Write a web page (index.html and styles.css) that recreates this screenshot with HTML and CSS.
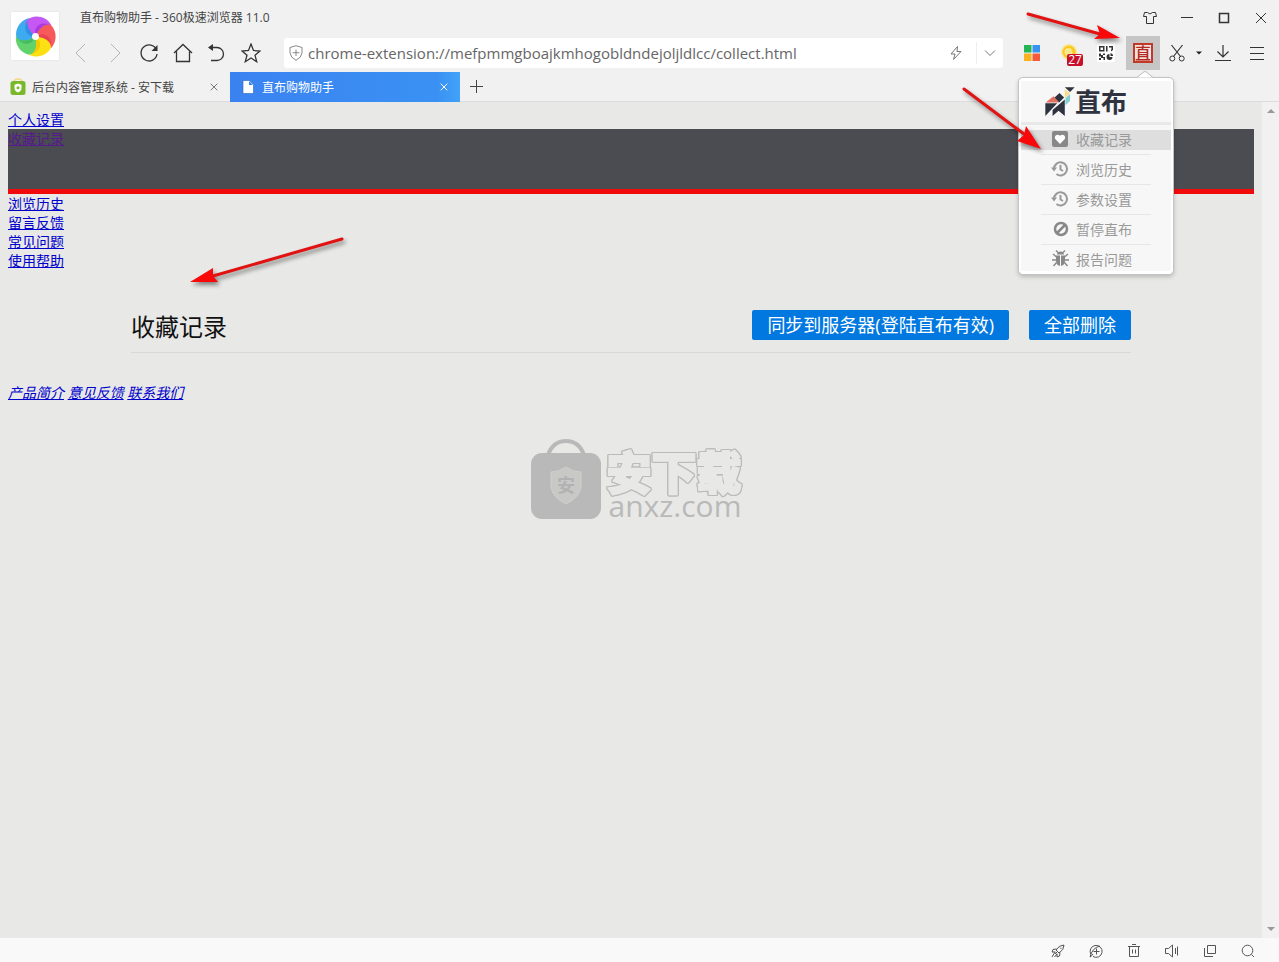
FILE: index.html
```
<!DOCTYPE html>
<html lang="zh-CN">
<head>
<meta charset="utf-8">
<title>直布购物助手</title>
<link rel="stylesheet" href="styles.css">
</head>
<body>
<header class="chrome">
  <div class="chrome-top">
    <svg class="brand" viewBox="0 0 48 48" aria-hidden="true">
      <defs>
        <path id="petal" d="M0 0C-6-3-11-9-10-15C-3-23 11-21 16-11C11-14 4-10 0 0Z"/>
        <path id="petal-fold" d="M0 0C-3-8 4-17 16-11C11-14 4-10 0 0Z"/>
      </defs>
      <rect width="48" height="48" fill="#fff"/>
      <g transform="translate(24.500 24.500)">
        <g fill="#3eabf0" transform="rotate(288)"><use href="#petal"/></g>
        <g fill="#62d26c" transform="rotate(216)"><use href="#petal"/></g>
        <g fill="#fde014" transform="rotate(144)"><use href="#petal"/></g>
        <g fill="#f65a5a" transform="rotate(72)"><use href="#petal"/></g>
        <g fill="#c558f2"><use href="#petal"/></g>
        <g fill="#a93be0"><use href="#petal-fold"/></g>
        <g fill="#e94452" transform="rotate(72)"><use href="#petal-fold"/></g>
        <g fill="#f5c800" transform="rotate(144)"><use href="#petal-fold"/></g>
        <g fill="#48bd60" transform="rotate(216)"><use href="#petal-fold"/></g>
        <g fill="#2f8fe6" transform="rotate(288)"><use href="#petal-fold"/></g>
        <circle r="3.500" fill="#fff"/>
      </g>
    </svg>
    <div class="chrome-rows">
      <div class="title-row">
        <span class="window-title">直布购物助手 - 360极速浏览器 11.0</span>
        <div class="window-buttons">
          <button class="icon-btn" aria-label="皮肤"><svg width="14" height="14" viewBox="0 0 14 14"><path d="M4.500 1.500H1.500L.5 5.500H3.500V12.500H10.500V5.500H13.500L12.500 1.500H9.500Q7 4.500 4.500 1.500Z"/></svg></button>
          <button class="icon-btn" aria-label="最小化"><svg width="12" height="12" viewBox="0 0 12 12"><path d="M0 5.500H12"/></svg></button>
          <button class="icon-btn" aria-label="最大化"><svg width="12" height="12" viewBox="0 0 12 12"><path stroke-width="1.500" d="M1.500 1.500H10.500V10.500H1.500Z"/></svg></button>
          <button class="icon-btn" aria-label="关闭"><svg width="12" height="12" viewBox="0 0 12 12"><path d="M1 1L11 11M11 1L1 11"/></svg></button>
        </div>
      </div>
      <div class="toolbar">
        <nav class="nav-buttons" aria-label="导航">
          <button class="icon-btn dim" aria-label="后退"><svg width="20" height="20" viewBox="0 0 20 20"><path d="M14 1L5 10L14 19"/></svg></button>
          <button class="icon-btn dim" aria-label="前进"><svg width="20" height="20" viewBox="0 0 20 20"><path d="M6 1L15 10L6 19"/></svg></button>
          <button class="icon-btn" aria-label="刷新"><svg width="20" height="20" viewBox="0 0 20 20"><path stroke-width="1.300" d="M17.500 7A8 8 0 1 0 18 11"/><path fill="#333" stroke="none" d="M18.500 2V8H12.500Z"/></svg></button>
          <button class="icon-btn" aria-label="主页"><svg width="20" height="20" viewBox="0 0 20 20"><path stroke-width="1.300" d="M1 10L10 1.500L19 10M3.500 8.500V18.500H16.500V8.500"/></svg></button>
          <button class="icon-btn" aria-label="撤销"><svg width="20" height="20" viewBox="0 0 20 20"><path stroke-width="1.300" d="M4 4.500H10A6.500 6.500 0 0 1 10 17.500H4"/><path fill="#333" stroke="none" d="M1 4.500L6 1V8Z"/></svg></button>
          <button class="icon-btn" aria-label="收藏"><svg width="20" height="20" viewBox="0 0 20 20"><path stroke-width="1.300" d="M10 1L12.500 7.500L19 8L14 12.200L15.700 18.700L10 15L4.300 18.700L6 12.200L1 8L7.500 7.500Z"/></svg></button>
        </nav>
        <div class="address">
          <svg class="shield" width="14" height="16" viewBox="0 0 14 16"><path d="M7 .7L13 2.500V8Q12.500 12.500 7 15.300Q1.500 12.500 1 8V2.500ZM7 4.500V11M3.700 7.700H10.300"/></svg>
          <input class="url" aria-label="地址" value="chrome-extension://mefpmmgboajkmhogobldndejoljldlcc/collect.html">
          <button class="addr-btn" aria-label="极速模式"><svg width="14" height="16" viewBox="0 0 14 16"><path d="M8.500 1.500L2 9H6L4.500 14.500L12 6.500H8Z"/></svg></button>
          <button class="addr-btn addr-more" aria-label="更多地址"><svg width="12" height="8" viewBox="0 0 12 8"><path d="M1 1.500L6 6.500L11 1.500"/></svg></button>
        </div>
        <div class="tools">
          <button class="icon-btn" aria-label="应用"><svg width="16" height="16" viewBox="0 0 16 16" stroke="none"><path fill="#22b455" d="M0 0H7.500V7.500H0Z"/><path fill="#3594f0" d="M8.500 0H16V7.500H8.500Z"/><path fill="#fbb022" d="M0 8.500H7.500V16H0Z"/><path fill="#f45b3b" d="M8.500 8.500H16V16H8.500Z"/></svg></button>
          <button class="icon-btn weather" aria-label="天气"><svg width="18" height="18" viewBox="0 0 18 18" stroke="none"><circle cx="9" cy="8" r="8" fill="#f8e7a0"/><circle cx="9" cy="8" r="6.500" fill="#fbc91c"/><circle cx="8.500" cy="8" r="4" fill="#fde98c"/></svg><span class="badge">27</span></button>
          <button class="icon-btn" aria-label="二维码"><svg width="18" height="18" viewBox="0 0 18 18" stroke="none"><rect width="18" height="18" rx="2" fill="#fff"/><path fill="#333" fill-rule="evenodd" d="M2 2H7.500V7.500H2ZM3.500 3.500V6H6V3.500ZM9 2H10.500V7.500H9ZM12 2H16V6L14 7.500V5.500H14.500V3.500H12ZM2 9.500H4V11H6V9.500H8V11H6V13H8V16H6.500V14H4V12.500H2ZM2 14H4V16H2ZM12.500 10A3 3 0 1 0 15.500 13H12.500ZM13.500 9V12H16.200Q16 9.500 13.500 9Z"/></svg></button>
          <button class="icon-btn active" aria-label="直布"><span class="zhi-icon">直</span></button>
          <button class="icon-btn cut" aria-label="截图"><svg width="16" height="18" viewBox="0 0 16 18"><path stroke-width="1.200" d="M2.500 1L11.500 12.500M13.500 1L4.500 12.500"/><circle cx="3.300" cy="14.500" r="2.500"/><circle cx="12.700" cy="14.500" r="2.500"/></svg></button>
          <button class="icon-btn caret" aria-label="截图选项"><svg width="6" height="4" viewBox="0 0 6 4" stroke="none"><path fill="#222" d="M0 .5H6L3 3.500Z"/></svg></button>
          <button class="icon-btn flush" aria-label="下载"><svg width="16" height="18" viewBox="0 0 16 18"><path stroke-width="1.200" d="M8 1V13M2.500 7.500L8 13L13.500 7.500M0 16.500H16"/></svg></button>
          <button class="icon-btn flush" aria-label="菜单"><svg width="14" height="14" viewBox="0 0 14 14"><path d="M0 1.500H14M0 7.500H14M0 13.500H14"/></svg></button>
        </div>
      </div>
    </div>
  </div>
  <div class="tabs">
    <div class="tab">
      <svg width="16" height="18" viewBox="0 0 16 18"><path fill="none" stroke="#f3d783" stroke-width="1.500" d="M4 4Q4 1 8 1T12 4"/><rect x=".5" y="3" width="15" height="14" rx="2.500" fill="#78b82a"/><path fill="#fff" d="M8 5.500L11.500 6.700V10Q11.500 13 8 14.500Q4.500 13 4.500 10V6.700Z"/><circle cx="8" cy="9.800" r="1.500" fill="#78b82a"/></svg>
      <span class="tab-label">后台内容管理系统 - 安下载</span>
      <button class="tab-close" aria-label="关闭标签"><svg width="8" height="8" viewBox="0 0 8 8"><path d="M.7 .7L7.300 7.300M7.300 .7L.7 7.300"/></svg></button>
    </div>
    <div class="tab tab-current">
      <svg width="16" height="14" viewBox="0 0 16 14"><path fill="#fff" stroke="#2667b5" stroke-width=".6" d="M3 .5H9.500L13.500 4.500V13.500H3Z"/><path fill="#3b82f1" d="M9 1V5H13Z"/></svg>
      <span class="tab-label">直布购物助手</span>
      <button class="tab-close" aria-label="关闭标签"><svg width="8" height="8" viewBox="0 0 8 8"><path d="M.7 .7L7.300 7.300M7.300 .7L.7 7.300"/></svg></button>
    </div>
    <button class="tab-new" aria-label="新标签"><svg width="13" height="13" viewBox="0 0 13 13"><path d="M6.500 0V13M0 6.500H13"/></svg></button>
  </div>
</header>

<div class="viewport">
  <main class="page">
    <nav class="links" aria-label="页面">
      <div><a href="#settings">个人设置</a></div>
      <div class="current"><a class="visited" href="#collect">收藏记录</a></div>
      <div><a href="#history">浏览历史</a></div>
      <div><a href="#feedback">留言反馈</a></div>
      <div><a href="#faq">常见问题</a></div>
      <div><a href="#help">使用帮助</a></div>
    </nav>
    <section class="records">
      <h1>收藏记录</h1>
      <div class="actions">
        <button class="action">同步到服务器(登陆直布有效)</button>
        <button class="action">全部删除</button>
      </div>
    </section>
    <address class="footer-links"><a href="#about">产品简介</a> <a href="#advice">意见反馈</a> <a href="#contact">联系我们</a></address>
  </main>
  <div class="scrollbar" aria-hidden="true">
    <svg width="8" height="4" viewBox="0 0 8 4"><path d="M0 4L4 0L8 4Z"/></svg>
    <svg width="8" height="4" viewBox="0 0 8 4"><path d="M0 0L4 4L8 0Z"/></svg>
  </div>
  <div class="watermark">
    <svg width="72" height="82" viewBox="0 0 72 82"><path fill="none" stroke="#b9b9b9" stroke-width="4" d="M18 17Q23 3 36 3T54 17"/><rect x="1" y="15" width="70" height="66" rx="11" fill="#b9b9b9"/><path fill="#c8c8c7" stroke="#cfcfce" d="M36 29Q43 34 51 34V49Q50 59 36 66Q22 59 21 49V34Q29 34 36 29Z"/><text class="bag-mark" x="36" y="54" text-anchor="middle">安</text></svg>
    <div class="watermark-text">
      <span class="watermark-name">安下载</span>
      <span class="watermark-site">anxz.com</span>
    </div>
  </div>
</div>

<footer class="status">
  <button class="icon-btn" aria-label="加速"><svg width="14" height="14" viewBox="0 0 14 14"><path d="M13 1Q8 1 5 6L8 9Q13 6 13 1ZM5.500 5L2 5.500L1 8H4.500M9 8.500L8.500 12L6 13V9.500M4 8L1 13M6 10L3.500 13M9 3.500L10.500 5M4 10L7 7"/></svg></button>
  <button class="icon-btn" aria-label="网页加速"><svg width="14" height="14" viewBox="0 0 14 14"><path d="M4 12.500A6 6 0 1 0 2 10.500M1 13Q3 4 11 2M1 13Q3 12 4 10M4.500 7.500H10.500M7.500 4.500V10.500"/></svg></button>
  <button class="icon-btn" aria-label="清理"><svg width="12" height="14" viewBox="0 0 12 14"><path d="M0 2.500H12M4 .5H8M1.500 2.500V12.500H10.500V2.500M4.500 5.500V9.500M7.500 5.500V9.500"/></svg></button>
  <button class="icon-btn" aria-label="声音"><svg width="14" height="14" viewBox="0 0 14 14"><path d="M.5 4.500H3.500L7.500 1V13L3.500 9.500H.5ZM10.500 4V10M12.500 2.500V11.500"/></svg></button>
  <button class="icon-btn" aria-label="窗口"><svg width="12" height="12" viewBox="0 0 12 12"><path d="M3.500 .5H11.500V8.500H3.500ZM.5 3V11.500H9"/></svg></button>
  <button class="icon-btn" aria-label="缩放"><svg width="14" height="14" viewBox="0 0 14 14"><circle cx="6.500" cy="6.500" r="5.300"/><path d="M10.500 10.500L13 13"/></svg></button>
</footer>

<aside class="popup">
  <svg class="popup-tip" width="16" height="7" viewBox="0 0 16 7"><path fill="#fff" stroke="#bbb" d="M0 6.500L7 .7H9L16 6.500"/></svg>
  <div class="popup-brand">
    <svg width="30" height="30" viewBox="105 50 91 91"><path fill="#e4715f" d="M107 97L131 78L148 97Z"/><path fill="#2f3340" d="M134 82L149 68L163 82L148 97ZM106 99H142L106 138ZM165 88V138L146 122L128 138V120ZM165 51H195L181 65Z"/><path fill="#f7dc8b" d="M165 57L181 69L165 84Z"/><path fill="#7fd0cf" d="M167 84L181 71V92L167 105Z"/></svg>
    <span>直布</span>
  </div>
  <ul class="popup-list">
    <li><a class="selected" href="#p-collect"><svg viewBox="0 0 18 18"><rect x="1" y="1" width="16" height="16" rx="2" fill="#888"/><path fill="#fff" d="M9 14L4.500 9.300C2.500 7 5.500 2.700 9 5.800C12.500 2.700 15.500 7 13.500 9.300Z"/></svg>收藏记录</a></li>
    <li><a href="#p-history"><svg viewBox="0 0 18 18"><path fill="none" stroke="#999" stroke-width="2" d="M3 9A6.500 6.500 0 1 1 5.500 14M9.500 5V9.500L12 11"/><path fill="#999" d="M0 7.500H6L3 11.500Z"/></svg>浏览历史</a></li>
    <li><a href="#p-settings"><svg viewBox="0 0 18 18"><path fill="none" stroke="#999" stroke-width="2" d="M3 9A6.500 6.500 0 1 1 5.500 14M9.500 5V9.500L12 11"/><path fill="#999" d="M0 7.500H6L3 11.500Z"/></svg>参数设置</a></li>
    <li><a href="#p-pause"><svg viewBox="0 0 18 18"><circle cx="10" cy="9" r="6" fill="none" stroke="#888" stroke-width="2.500"/><path stroke="#888" stroke-width="2.500" d="M14 5L6 13"/></svg>暂停直布</a></li>
    <li><a href="#p-report"><svg viewBox="0 0 18 18"><path fill="#888" d="M6 4.500Q6.500 1.500 9.500 1.500T13 4.500ZM5 5.500H9V16Q5 15 5 11ZM10 5.500H14V11Q14 15 10 16Z"/><path fill="none" stroke="#888" stroke-width="1.400" d="M2 4L5.500 7M17 4L13.500 7M1 10H5M18 10H14M2.500 16L5.500 12.500M16.500 16L13.500 12.500M5 .5L7.500 3M14 .5L11.500 3"/></svg>报告问题</a></li>
  </ul>
</aside>

<svg class="pointer pointer-tool" width="100" height="36" viewBox="0 0 100 36"><path class="shaft" d="M4 4L76 24"/><path class="head" d="M96 28L70 29L76 24L73 15Z"/></svg>
<svg class="pointer pointer-menu" width="88" height="70" viewBox="0 0 88 70"><path class="shaft" d="M4 4L64 49"/><path class="head" d="M81 64L57 56L64 50L66 41Z"/></svg>
<svg class="pointer pointer-page" width="164" height="56" viewBox="0 0 164 56"><path class="shaft" d="M155 5L26 42"/><path class="head" d="M3 48L26 34L26 42L31 48Z"/></svg>
</body>
</html>
```
FILE: styles.css
```
* { box-sizing: border-box; }

body {
  position: relative;
  display: flex;
  flex-direction: column;
  min-height: 100vh;
  margin: 0;
  background: #e8e8e6;
  color: #444;
  font: 12px/18px "Open Sans", "Noto Sans CJK SC", sans-serif;
}

button { padding: 0; border: 0; background: none; color: inherit; font: inherit; }
svg { display: block; flex: none; }

.chrome { background: #f1f1f1; }
.chrome-top { display: flex; padding: 0 0 2px 11px; }
.brand { width: 48px; height: 48px; margin-top: 12px; box-shadow: 0 0 2px #ddd; }
.chrome-rows { flex: 1; min-width: 0; padding-left: 5px; }
.title-row { display: flex; align-items: center; justify-content: space-between; height: 36px; padding: 0 1px 0 16px; }
.window-buttons { display: flex; gap: 3px; }
.icon-btn { display: flex; align-items: center; justify-content: center; width: 34px; height: 34px; }
.icon-btn svg { fill: none; stroke: #333; }
.icon-btn svg[stroke="none"] { stroke: none; }
.icon-btn.dim svg { stroke: #b4b4b4; }

.toolbar { display: flex; align-items: center; }
.nav-buttons { display: flex; margin-right: 16px; }
.address { display: flex; flex: 1; align-items: center; min-width: 0; height: 30px; padding-left: 5px; border-radius: 3px; background: #fff; }
.shield { fill: none; stroke: #888; }
.url { flex: 1; min-width: 0; padding: 0 0 0 5px; border: 0; background: none; color: #666; font: 15px/20px "Open Sans", sans-serif; }
.addr-btn { display: flex; align-items: center; justify-content: center; width: 40px; height: 22px; }
.addr-btn svg { fill: none; stroke: #777; }
.addr-more { width: 27px; border-left: 1px solid #eee; }
.tools { display: flex; gap: 3px; padding: 0 7px 0 12px; }
.weather { position: relative; }
.badge { position: absolute; right: 3px; bottom: 4px; width: 16px; height: 12px; border-radius: 2px; background: #c8102a; color: #fff; font-size: 12px; line-height: 12px; text-align: center; }
.active { background: #c6c6c6; }
.zhi-icon { width: 20px; height: 20px; border: 2px solid #c0392b; background: #f3e4e1; color: #b52a20; font-size: 16px; font-weight: 500; line-height: 16px; text-align: center; }
.cut { width: 28px; }
.caret { width: 10px; }
.flush { width: 31px; }

.tabs { display: flex; height: 30px; border-bottom: 1px solid #dcdcdc; }
.tab { display: flex; align-items: center; gap: 6px; width: 230px; height: 30px; padding: 0 12px 0 10px; }
.tab-current { background: linear-gradient(90deg, #3b82f1, #3a91f3 90%, #41a2f8); color: #fff; }
.tab-label { flex: 1; padding-top: 2px; }
.tab-close svg { stroke: #777; }
.tab-current .tab-close svg { stroke: #fff; }
.tab-new { padding: 0 10px; }
.tab-new svg { stroke: #444; }

.viewport { position: relative; display: flex; flex: 1; }
.page { flex: 1; padding: 8px; font-size: 14px; line-height: 19px; }
.page a { color: #0000cc; }
.page .visited { color: #551a8b; }
.current { height: 65px; border-bottom: 5px solid #f00a0a; background: #4b4c51; }
.records { display: flex; align-items: center; justify-content: space-between; max-width: 1000px; margin: 34px auto 30px; padding-bottom: 7px; border-bottom: 1px solid #d8d8d6; }
.records h1 { margin: 0; padding-top: 5px; color: #111; font-size: 24px; font-weight: 400; line-height: 36px; }
.actions { display: flex; gap: 20px; }
.action { height: 30px; padding: 0 15px; border-radius: 2px; background: #0078e0; color: #fff; font-size: 18px; line-height: 30px; }
.footer-links { font-style: italic; }

.scrollbar { display: flex; flex-direction: column; align-items: center; justify-content: space-between; width: 17px; padding: 7px 0; background: #f1f1f1; }
.scrollbar svg { fill: #999; }

.watermark { position: absolute; top: 336px; left: calc(50% - 110px); display: flex; gap: 5px; color: #b9b9b9; }
.bag-mark { fill: #b2b2b2; font-size: 18px; font-weight: 700; }
.watermark-text { display: flex; flex-direction: column; padding-top: 14px; }
.watermark-name { color: #e8e8e6; font-size: 45px; font-weight: 900; line-height: 42px; -webkit-text-stroke: 2px #e8e8e6; filter: drop-shadow(1px 0 #bbb) drop-shadow(-1px 0 #bbb) drop-shadow(0 1px #bbb) drop-shadow(0 -1px #bbb); }
.watermark-site { padding-left: 2px; font-size: 30px; line-height: 24px; }

.status { display: flex; justify-content: flex-end; gap: 4px; height: 24px; padding: 2px 14px 0 0; background: #f9f9f9; }
.status .icon-btn { height: 22px; }
.status svg { stroke: #555; }

.popup { position: absolute; top: 77px; right: 105px; width: 156px; padding: 3px 2px; border: 1px solid #c4c4c4; border-radius: 5px; background: #fff; box-shadow: 0 2px 4px rgba(0, 0, 0, .2); }
.popup-tip { position: absolute; top: -7px; right: 20px; }
.popup-brand { display: flex; align-items: center; height: 44px; padding-left: 24px; border-bottom: 3px solid #e8e8e8; background: #f7f7f7; color: #2f3340; font-size: 26px; font-weight: 700; line-height: 40px; }
.popup-list { margin: 0; padding: 0 20px; background: #f7f7f7; list-style: none; }
.popup-list li { height: 30px; padding-top: 5px; border-bottom: 1px solid #e6e6e6; }
.popup-list li:last-child { height: 26px; border: 0; }
.popup-list a { display: flex; align-items: center; gap: 7px; height: 20px; margin: 0 -20px; padding-left: 30px; color: #999; font-size: 14px; line-height: 20px; text-decoration: none; }
.popup-list svg { width: 18px; height: 18px; margin-bottom: 3px; }
.popup-list .selected { background: #dedede; }

.pointer { position: absolute; overflow: visible; filter: drop-shadow(2px 3px 2px rgba(0, 0, 0, .45)); pointer-events: none; }
.shaft { fill: none; stroke: #e01212; stroke-width: 3; stroke-linecap: round; }
.head { fill: #f80808; }
.pointer-tool { top: 10px; right: 155px; }
.pointer-menu { top: 85px; right: 231px; }
.pointer-page { top: 234px; left: 187px; }
```
